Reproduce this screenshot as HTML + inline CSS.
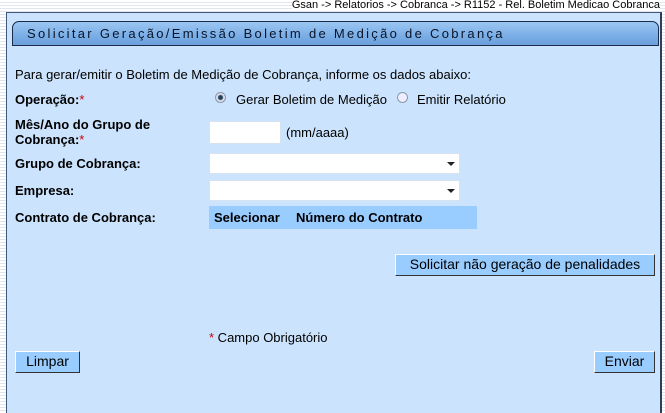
<!DOCTYPE html>
<html style="width:665px;height:413px;overflow:hidden"><head><style>
*{margin:0;padding:0;box-sizing:border-box}
body{width:665px;height:413px;overflow:hidden;position:relative;font-family:"Liberation Sans",Arial,sans-serif;font-size:13px;color:#000;
background:repeating-linear-gradient(#fff 0,#fff 2px,#dfe6f0 2px,#dfe6f0 3px)}
.a{position:absolute;white-space:nowrap}
#panel{position:absolute;left:6px;top:12px;width:656px;height:401px;background:#cbe3fc;border:1px solid #43577a;border-bottom:0;border-right:2px solid #2e3e5c}
#hdr{position:absolute;left:12px;top:21px;width:647px;height:25px;border:1px solid #1b2b4a;border-radius:7px 7px 0 0;
background:linear-gradient(#9cc6f2,#7aaee6 60%,#6c9fdb);}
b{font-weight:bold}
.r{color:#c00}
.inp{position:absolute;background:#fff;border:1px solid #d6e2ee}
.sel:after{content:"";position:absolute;right:4px;top:8px;border:4px solid transparent;border-top:4px solid #222}
.btn{position:absolute;background:#99ccff;border:1px solid #fff;border-right-color:#333;border-bottom-color:#333;font-size:14px;text-align:center;line-height:19px}
.rad{position:absolute;width:11px;height:11px;border-radius:50%;border:1px solid #8a9aaa;background:#eef}
</style></head><body>
<div class="a" style="right:5px;top:0;font-size:11px;line-height:11px;background:#fff">Gsan -&gt; Relatorios -&gt; Cobranca -&gt; R1152 - Rel. Boletim Medicao Cobranca</div>
<div id="panel"></div>
<div id="hdr"></div>
<div class="a" style="left:27px;top:26px;font-size:13px;letter-spacing:2.3px;color:#0a1428">Solicitar Geração/Emissão Boletim de Medição de Cobrança</div>
<div class="a" style="left:15px;top:67px">Para gerar/emitir o Boletim de Medição de Cobrança, informe os dados abaixo:</div>
<div class="a" style="left:15px;top:92px"><b>Operação:</b><span class="r">*</span></div>
<div class="rad" style="left:215px;top:92px;background:radial-gradient(#245 0 2px,#dde 3px)"></div>
<div class="a" style="left:236px;top:92px">Gerar Boletim de Medição</div>
<div class="rad" style="left:397px;top:92px"></div>
<div class="a" style="left:417px;top:92px">Emitir Relatório</div>
<div class="a" style="left:15px;top:117px;line-height:15px"><b>Mês/Ano do Grupo de<br>Cobrança:</b><span class="r">*</span></div>
<div class="inp" style="left:209px;top:121px;width:72px;height:23px"></div>
<div class="a" style="left:286px;top:125px">(mm/aaaa)</div>
<div class="a" style="left:15px;top:156px"><b>Grupo de Cobrança:</b></div>
<div class="inp sel" style="left:209px;top:153px;width:251px;height:21px"></div>
<div class="a" style="left:15px;top:183px"><b>Empresa:</b></div>
<div class="inp sel" style="left:209px;top:180px;width:251px;height:21px"></div>
<div class="a" style="left:15px;top:210px"><b>Contrato de Cobrança:</b></div>
<div style="position:absolute;left:209px;top:206px;width:268px;height:23px;background:#99ccff"></div>
<div class="a" style="left:214px;top:210px"><b>Selecionar</b></div>
<div class="a" style="left:296px;top:210px"><b>Número do Contrato</b></div>
<div class="btn" style="left:395px;top:254px;width:260px;height:22px">Solicitar não geração de penalidades</div>
<div class="a" style="left:209px;top:330px"><span class="r">*</span> Campo Obrigatório</div>
<div class="btn" style="left:15px;top:351px;width:65px;height:22px">Limpar</div>
<div class="btn" style="left:594px;top:351px;width:61px;height:22px">Enviar</div>
</body></html>
